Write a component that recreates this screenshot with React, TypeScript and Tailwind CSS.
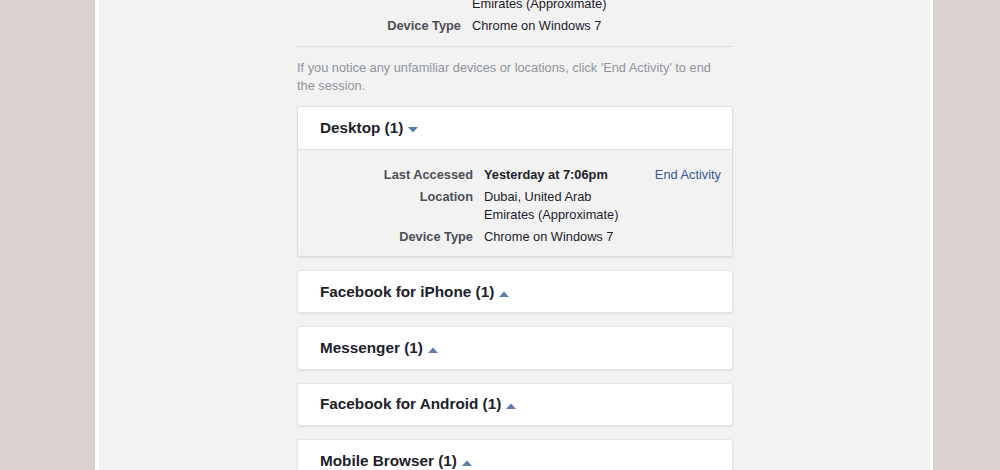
const font = { fontFamily: '"Liberation Sans", Arial, sans-serif' };

function Caret({ up }: { up?: boolean }) {
  return (
    <svg width="10" height="6" viewBox="0 0 10 6" className="ml-[5px] mt-[4px] inline-block">
      {up ? <path d="M0 6 L5 0.5 L10 6 Z" fill="#5d7bab" /> : <path d="M0 0 L10 0 L5 5.5 Z" fill="#5d7bab" />}
    </svg>
  );
}

function Row({ label, children, labelW }: { label: string; children: React.ReactNode; labelW: string }) {
  return (
    <div className="flex">
      <div className={`${labelW} shrink-0 text-right font-bold text-[#4b4f56]`}>{label}</div>
      <div className="ml-[11px] w-[145px] text-[#1d2129]">{children}</div>
    </div>
  );
}

function Section({ title, open }: { title: string; open?: boolean }) {
  return (
    <div className="rounded-[3px] border border-[#e5e6e9] bg-white shadow-[0_1px_2px_rgba(0,0,0,0.08)]">
      <div className="flex h-[41.3px] items-center pl-[22px] text-[15.3px] font-bold text-[#1d2129]">
        {title}
        <Caret up={!open} />
      </div>
    </div>
  );
}

export default function App() {
  return (
    <div className="h-[470px] overflow-hidden bg-[#dbd3cf]" style={font}>
      <div className="ml-[95px] flow-root h-full w-[838px] border-l-4 border-r-[3px] border-white bg-[#f2f2f2]">
        <div className="ml-[198px] w-[436px] text-[12.8px] leading-[18px]">
          {/* previous session, cut off at top */}
          <div className="-mt-[23px] space-y-1 border-b border-[#dddfe2] pb-[11px]">
            <Row label="Location" labelW="w-[164px]">
              Dubai, United Arab Emirates (Approximate)
            </Row>
            <Row label="Device Type" labelW="w-[164px]">
              Chrome on Windows 7
            </Row>
          </div>

          <p className="mt-[12px] w-[425px] text-[#90949c]">
            If you notice any unfamiliar devices or locations, click 'End Activity' to end the session.
          </p>

          <div className="mt-[11px] rounded-[3px] border border-[#dddfe2] bg-white shadow-[0_1px_2px_rgba(0,0,0,0.08)]">
            <div className="flex h-[43px] items-center border-b border-[#dddfe2] pl-[22px] text-[15.3px] font-bold text-[#1d2129]">
              Desktop (1)
              <Caret />
            </div>
            <div className="flex bg-[#f2f2f2] pt-[16px] pb-[10px] pr-[11px]">
              <div className="space-y-1">
                <Row label="Last Accessed" labelW="w-[175px]">
                  <span className="font-bold">Yesterday at 7:06pm</span>
                </Row>
                <Row label="Location" labelW="w-[175px]">
                  Dubai, United Arab Emirates (Approximate)
                </Row>
                <Row label="Device Type" labelW="w-[175px]">
                  Chrome on Windows 7
                </Row>
              </div>
              <a className="ml-auto text-[#365899]">End Activity</a>
            </div>
          </div>

          <div className="mt-[13px] space-y-[13px]">
            <Section title="Facebook for iPhone (1)" />
            <Section title="Messenger (1)" />
            <Section title="Facebook for Android (1)" />
            <Section title="Mobile Browser (1)" />
          </div>
        </div>
      </div>
    </div>
  );
}
